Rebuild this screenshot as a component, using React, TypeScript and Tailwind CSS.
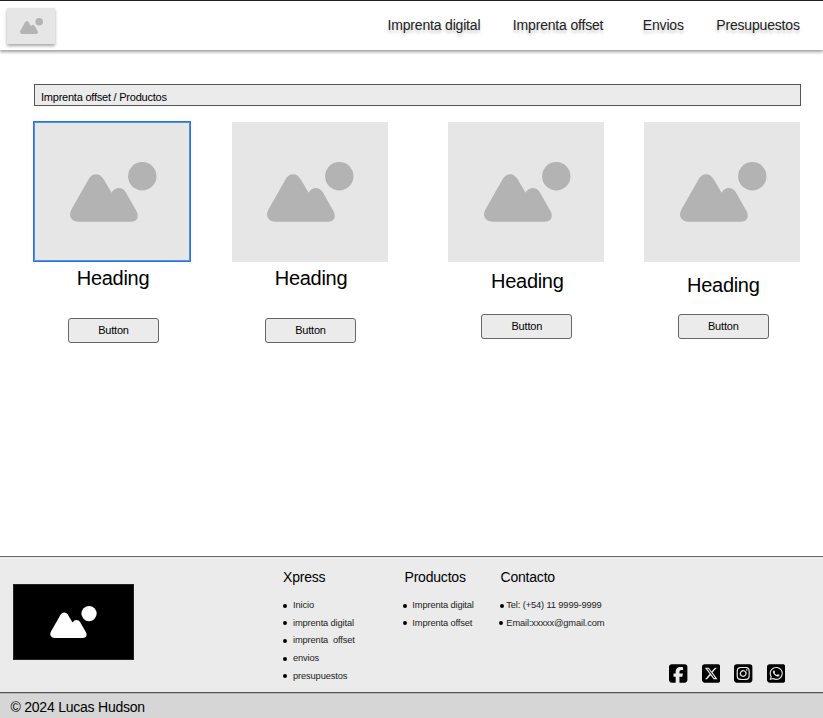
import React from "react";
import {
  FaSquareFacebook,
  FaSquareXTwitter,
  FaSquareInstagram,
  FaSquareWhatsapp,
} from "react-icons/fa6";

function Landscape({ className }: { className: string }) {
  return (
    <svg
      viewBox="34.7 39.8 86.6 59.7"
      className={`overflow-visible ${className}`}
      fill="currentColor"
      aria-hidden="true"
    >
      <circle cx="107" cy="54" r="14.2" />
      <path d="M43.5 99.5C36 99.5 32.8 93.5 36 87.5L53 57.5C57 50.2 64.500 50.2 68.500 57.300L76.300 70.500C79.500 64.500 87 64.300 90.500 70L101 88.500C104.500 95 101.500 99.500 95.500 99.500Z" />
    </svg>
  );
}

const nav = [
  { label: "Imprenta digital", gap: "" },
  { label: "Imprenta offset", gap: "ml-[32.500px]" },
  { label: "Envios", gap: "ml-[39.500px]" },
  { label: "Presupuestos", gap: "ml-[32.500px]" },
];

const cards = [
  { margin: "", image: "h-[139px] pl-[36px] shadow-[0_0_0_1px_#2d73cf,inset_0_0_0_1px_#4f93e6]", heading: "mt-[3px]", button: "mt-[26px] ml-[34px]" },
  { margin: "ml-[42px]", image: "h-[140px] pl-[35px]", heading: "mt-[2px]", button: "mt-[26px] ml-[33px]" },
  { margin: "ml-[60.300px]", image: "h-[140px] pl-[35.700px]", heading: "mt-[5px]", button: "mt-[19px] ml-[33px]" },
  { margin: "ml-[40px]", image: "h-[140px] pl-[35.500px]", heading: "mt-[9px]", button: "mt-[15px] ml-[33.500px]" },
];

function Card({ margin, image, heading, button }: (typeof cards)[number]) {
  return (
    <article className={`w-[156px] shrink-0 ${margin}`}>
      <div className={`flex bg-[#e6e6e6] pt-[40px] text-[#b3b3b3] ${image}`}>
        <Landscape className="h-[59.700px] w-[86.600px]" />
      </div>
      <h2 className={`pl-[2px] text-center text-[20px] leading-[28px] tracking-[-0.3px] ${heading}`}>
        Heading
      </h2>
      <button
        className={`block h-[25px] w-[91px] rounded-[3px] border border-[#666] bg-[#ebebeb] text-[11px] leading-[23px] tracking-[-0.2px] ${button}`}
      >
        Button
      </button>
    </article>
  );
}

function Item({ text, dot = "mr-[6px]", space = "" }: { text: string; dot?: string; space?: string }) {
  return (
    <li
      className={`flex h-[17.600px] items-center text-[9.300px] leading-[17px] tracking-[-0.13px] whitespace-pre text-[#222] ${space}`}
    >
      <span className={`size-[4px] shrink-0 rounded-full bg-black ${dot}`} />
      {text}
    </li>
  );
}

export default function App() {
  return (
    <div className="flex h-[718px] w-[823px] flex-col overflow-hidden bg-white font-['Liberation_Sans',Arial,sans-serif] text-black">
      <header className="flex h-[50px] shrink-0 border-t border-[#222] bg-white shadow-[0_2px_3px_rgba(0,0,0,0.38)]">
        <div className="mt-[7px] ml-[7px] h-[36px] w-[48px] bg-[#e6e6e6] pt-[10px] pl-[13px] text-[#b3b3b3] shadow-[0_2px_3px_rgba(0,0,0,0.35)]">
          <Landscape className="h-[16px] w-[23px]" />
        </div>
        <nav className="mr-[23.300px] ml-auto flex pt-[14px] text-[14px] leading-[21px] tracking-[-0.18px] text-[#222] [text-shadow:0_3px_3px_rgba(0,0,0,0.22)]">
          {nav.map((n) => (
            <a key={n.label} className={n.gap}>
              {n.label}
            </a>
          ))}
        </nav>
      </header>

      <main className="flex-1 pt-[34px] pl-[34px]">
        <div className="h-[22px] w-[767px] border border-[#555] bg-[#ebebeb] pt-[4px] pl-[6px] text-[11px] leading-[16px] tracking-[-0.23px]">
          Imprenta offset / Productos
        </div>
        <section className="mt-4 flex items-start">
          {cards.map((c, i) => (
            <Card key={i} {...c} />
          ))}
        </section>
      </main>

      <footer className="shrink-0">
        <div className="flex h-[136px] border-t border-[#666] bg-[#ebebeb]">
          <div className="mt-[27px] ml-[13px] h-[76px] w-[121px] shrink-0 border border-[#222] bg-black pt-[21px] pl-[36px] text-white">
            <Landscape className="h-[32px] w-[47px]" />
          </div>
          <div className="ml-[149px] w-[121px] shrink-0 pt-[11px]">
            <h3 className="text-[14px] leading-[19px] tracking-[-0.2px]">Xpress</h3>
            <ul className="mt-[10px]">
              <Item text="Inicio" />
              <Item text="imprenta digital" />
              <Item text="imprenta  offset" />
              <Item text="envios" />
              <Item text="presupuestos" />
            </ul>
          </div>
          <div className="w-[96px] shrink-0 pt-[11px]">
            <h3 className="pl-[0.500px] text-[14px] leading-[19px] tracking-[-0.2px]">Productos</h3>
            <ul className="mt-[10px] -ml-[0.700px]">
              <Item text="Imprenta digital" dot="mr-[5px]" />
              <Item text="Imprenta offset" dot="mr-[5px]" />
            </ul>
          </div>
          <div className="w-[140px] shrink-0 pt-[11px]">
            <h3 className="pl-[0.500px] text-[14px] leading-[19px] tracking-[-0.2px]">Contacto</h3>
            <ul className="mt-[10px] -ml-[0.700px]">
              <Item text="Tel: (+54) 11 9999-9999" dot="mr-[2px]" space="pl-px" />
              <Item text="Email:xxxxx@gmail.com" dot="mr-[3px]" />
            </ul>
          </div>
          <div className="ml-[29.400px] flex gap-[14px] pt-[106px]">
            <FaSquareFacebook className="h-[21px] w-[18.400px]" />
            <FaSquareXTwitter className="h-[21px] w-[18.400px]" />
            <FaSquareInstagram className="h-[21px] w-[18.400px]" />
            <FaSquareWhatsapp className="h-[21px] w-[18.400px]" />
          </div>
        </div>
        <div className="h-[26px] border-t border-[#555] bg-[#d6d6d6] pt-[5px] pl-[10.500px] text-[14px] leading-[19px] tracking-[-0.23px] shadow-[inset_0_1px_0_#b5b5b5]">
          © 2024 Lucas Hudson
        </div>
      </footer>
    </div>
  );
}
